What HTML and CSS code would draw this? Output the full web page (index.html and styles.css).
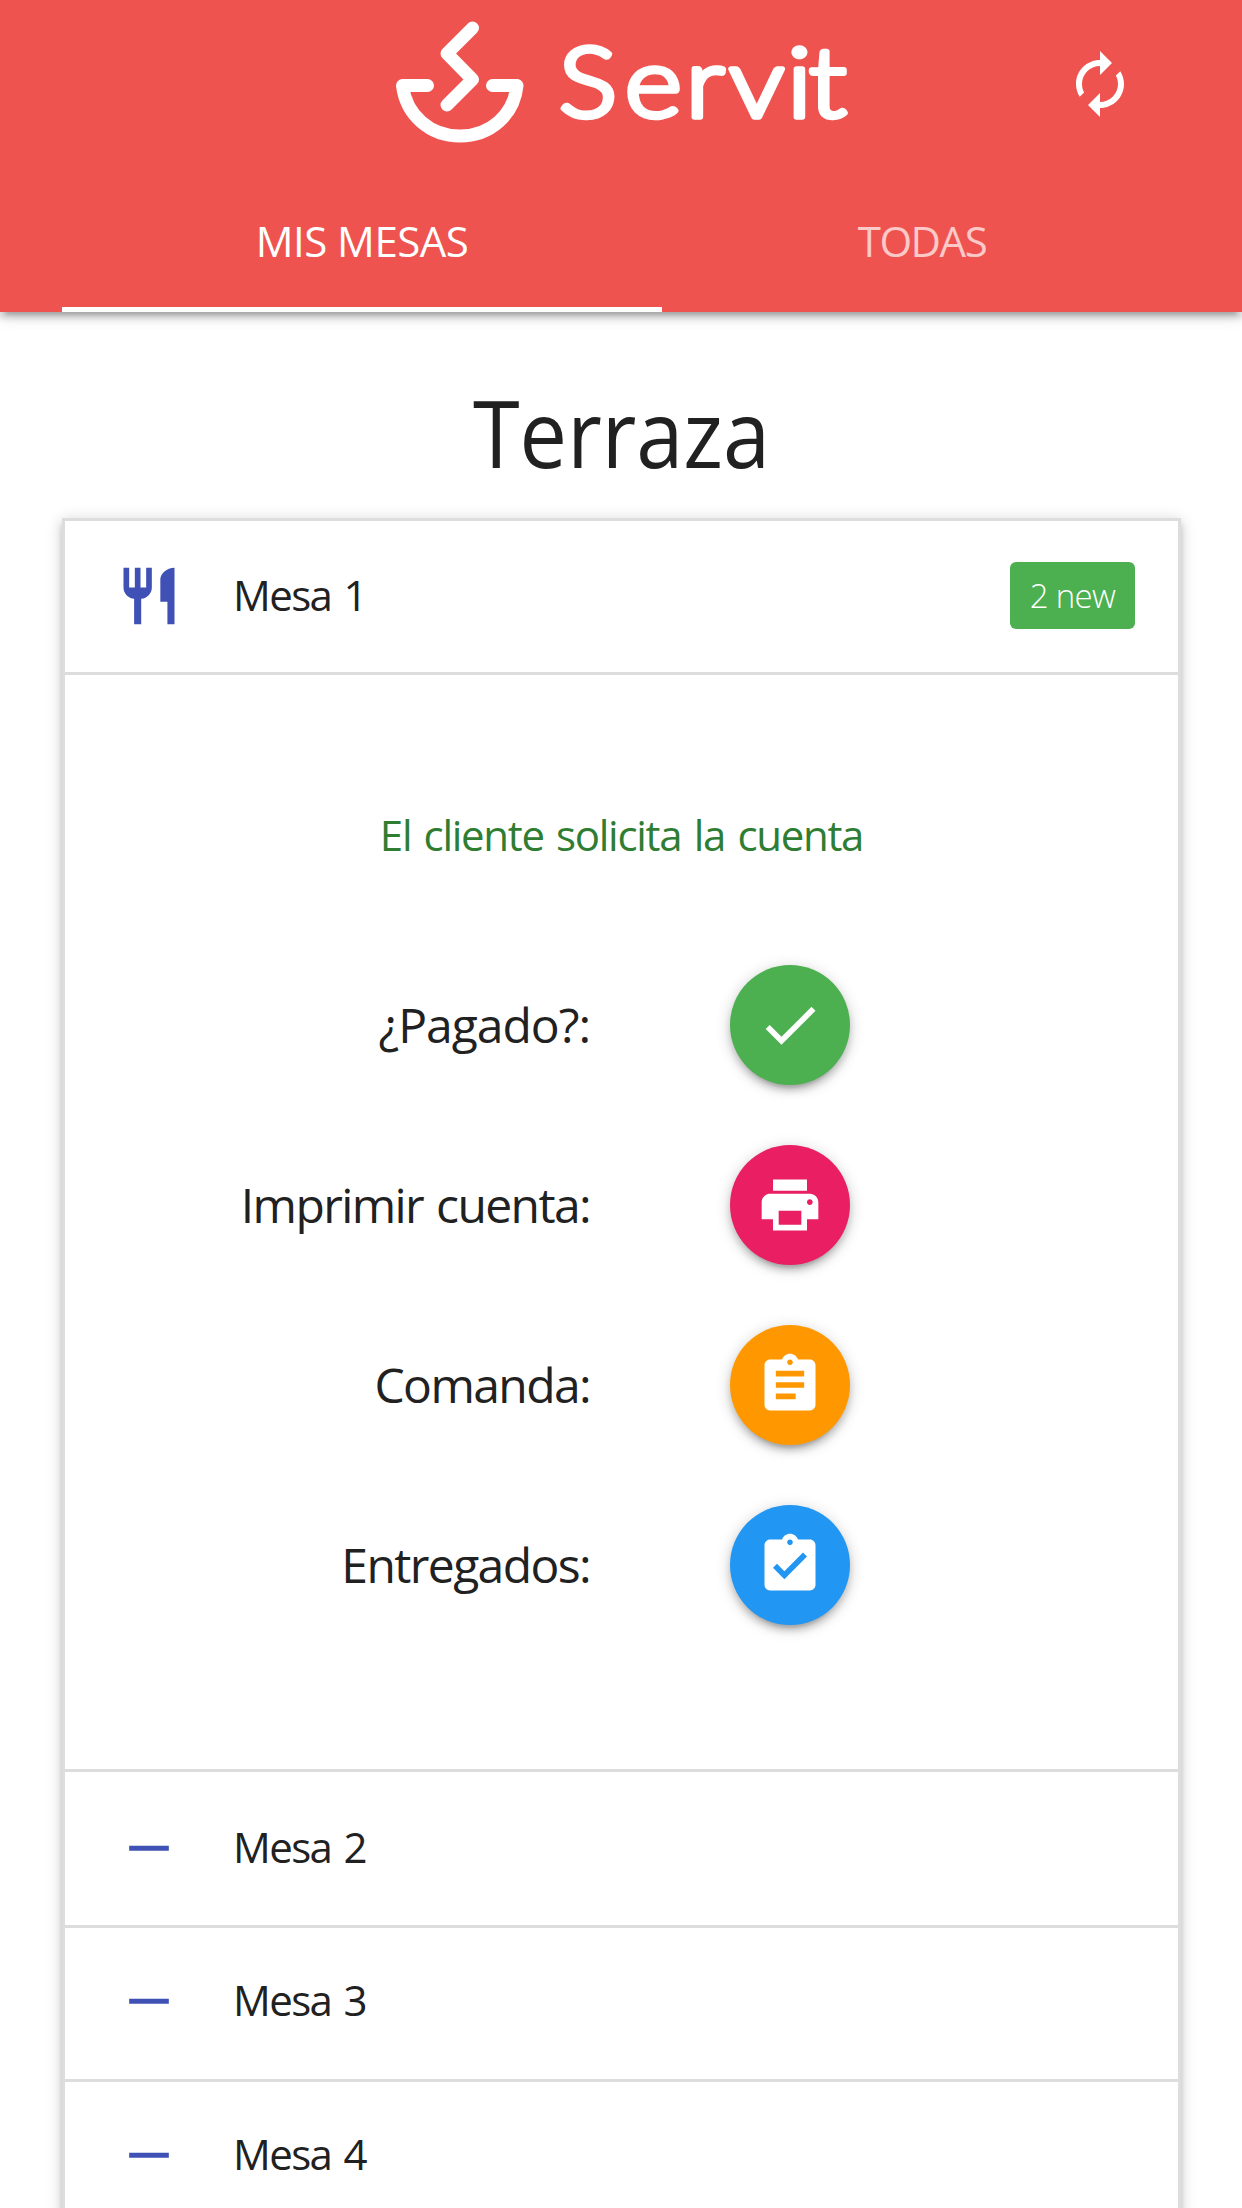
FILE: index.html
```html
<!DOCTYPE html>
<html lang="es">
<head>
<meta charset="utf-8">
<title>Servit</title>
<link rel="stylesheet" href="styles.css">
</head>
<body>
<header class="nav">
  <div class="brand-row">
    <svg class="logo" viewBox="0 0 460 150" role="img" aria-label="Servit">
      <g class="logo-mark">
        <path d="M82.500 28 L57 53.500 L82.500 79.500 L57 105"/>
        <path d="M37.500 85.500 H12.500 C16 115 40 136 70 136 C100 136 124 115 127 85.500 H102.500"/>
      </g>
      <text class="logo-text" transform="scale(1.14 1)" y="117.500" x="148 206 259.500 297.500 348.500 367.500">Servit</text>
    </svg>
    <svg class="refresh" viewBox="0 0 24 24"><path d="M12 6v3l4-4-4-4v3c-4.420 0-8 3.580-8 8 0 1.570.46 3.030 1.240 4.260L6.700 14.800c-.45-.83-.7-1.790-.7-2.800 0-3.310 2.690-6 6-6zm6.760 1.740L17.300 9.200c.44.840.7 1.790.7 2.800 0 3.310-2.690 6-6 6v-3l-4 4 4 4v-3c4.420 0 8-3.580 8-8 0-1.570-.46-3.030-1.240-4.260z"/></svg>
  </div>
  <nav class="tabs">
    <a class="tab active">MIS MESAS</a>
    <a class="tab">TODAS</a>
  </nav>
</header>
<main class="container">
  <h1 class="title">Terraza</h1>
  <ul class="tables">
    <li>
      <div class="row">
        <svg class="icon" viewBox="0 0 24 24"><path d="M11 9H9V2H7v7H5V2H3v7c0 2.120 1.660 3.840 3.750 3.970V22h2.500v-9.030C11.340 12.840 13 11.120 13 9V2h-2v7zm5-3v8h2.500v8H21V2c-2.760 0-5 2.240-5 4z"/></svg>
        <span class="name">Mesa 1</span>
        <span class="badge">2 new</span>
      </div>
      <div class="body">
        <p class="notice">El cliente solicita la cuenta</p>
        <div class="action"><span class="label loose">¿Pagado?:</span>
          <button class="fab green"><svg viewBox="0 0 24 24"><path d="M9 16.170L4.830 12l-1.420 1.410L9 19 21 7l-1.410-1.410z"/></svg></button></div>
        <div class="action"><span class="label">Imprimir cuenta:</span>
          <button class="fab pink"><svg viewBox="0 0 24 24"><path d="M19 8H5c-1.660 0-3 1.340-3 3v6h4v4h12v-4h4v-6c0-1.660-1.340-3-3-3zm-3 11H8v-5h8v5zm3-7c-.55 0-1-.45-1-1s.45-1 1-1 1 .45 1 1-.45 1-1 1zm-1-9H6v4h12V3z"/></svg></button></div>
        <div class="action"><span class="label">Comanda:</span>
          <button class="fab orange"><svg viewBox="0 0 24 24"><path d="M19 3h-4.180C14.400 1.840 13.300 1 12 1c-1.300 0-2.400.84-2.820 2H5c-1.100 0-2 .9-2 2v14c0 1.100.9 2 2 2h14c1.100 0 2-.9 2-2V5c0-1.100-.9-2-2-2zm-7 0c.55 0 1 .45 1 1s-.45 1-1 1-1-.45-1-1 .45-1 1-1zm2 14H7v-2h7v2zm3-4H7v-2h10v2zm0-4H7V7h10v2z"/></svg></button></div>
        <div class="action"><span class="label">Entregados:</span>
          <button class="fab blue"><svg viewBox="0 0 24 24"><path d="M19 3h-4.180C14.400 1.840 13.300 1 12 1c-1.300 0-2.400.84-2.820 2H5c-1.100 0-2 .9-2 2v14c0 1.100.9 2 2 2h14c1.100 0 2-.9 2-2V5c0-1.100-.9-2-2-2zm-7 0c.55 0 1 .45 1 1s-.45 1-1 1-1-.45-1-1 .45-1 1-1zm-2 14l-4-4 1.410-1.410L10 14.170l6.590-6.590L18 9l-8 8z"/></svg></button></div>
      </div>
    </li>
    <li class="row tall"><svg class="icon" viewBox="0 0 24 24"><path d="M5 11.200h14v1.800H5z"/></svg><span class="name">Mesa 2</span></li>
    <li class="row raised"><svg class="icon" viewBox="0 0 24 24"><path d="M5 11.200h14v1.800H5z"/></svg><span class="name">Mesa 3</span></li>
    <li class="row raised"><svg class="icon" viewBox="0 0 24 24"><path d="M5 11.200h14v1.800H5z"/></svg><span class="name">Mesa 4</span></li>
  </ul>
</main>
</body>
</html>
```
FILE: styles.css
```css
* { box-sizing: border-box; }
html, body { height: 2208px; overflow: hidden; }
body {
  margin: 0;
  background: #fff;
  color: #212121;
  font-family: "Open Sans", "Noto Sans", sans-serif;
  font-size: 42px;
}
.nav, .tables, .fab {
  box-shadow: 0 6px 6px rgba(0,0,0,.14), 0 9px 3px -6px rgba(0,0,0,.12), 0 3px 15px rgba(0,0,0,.2);
}
.nav {
  height: 312px;
  background: #ef5350;
  color: #fff;
  display: flex;
  flex-direction: column;
  justify-content: space-between;
}
.brand-row {
  display: flex;
  justify-content: space-between;
  padding: 0 106px 0 390px;
}
.logo { width: 460px; height: 150px; overflow: visible; }
.logo-mark { fill: none; stroke: #fff; stroke-width: 13px; stroke-linecap: round; stroke-linejoin: round; }
.logo-text {
  font-family: Lato, sans-serif;
  font-size: 96px;
  font-weight: 300;
  fill: #fff;
  stroke: #fff;
  stroke-width: 5.500px;
  stroke-linejoin: round;
}
.refresh { width: 72px; height: 72px; margin-top: 48px; fill: #fff; }
.tabs { display: flex; padding: 0 62px; height: 144px; }
.tab {
  flex: 0 0 600px;
  display: flex;
  align-items: center;
  justify-content: center;
  padding-top: 6px;
  color: rgba(255,255,255,.7);
  border-bottom: 5px solid transparent;
  letter-spacing: -1.500px;
}
.tab + .tab { flex: 0 0 520px; }
.tab.active { color: #fff; border-color: #fff; letter-spacing: -.5px; }
.container { width: 1119px; margin-left: 62px; }
.title {
  margin: 0;
  height: 206px;
  padding-top: 54px;
  font-size: 94px;
  line-height: 132px;
  font-weight: 400;
  transform: scaleX(.9);
  text-align: center;
}
.tables { margin: 0; padding: 0; list-style: none; border: 3px solid #ddd; border-bottom: 0; background: #fff; }
.row {
  display: flex;
  align-items: center;
  height: 154px;
  padding: 0 43px 2px 50px;
  border-bottom: 3px solid #ddd;
}
.row.tall { height: 156px; }
.row.raised { padding-bottom: 5px; }
.name { padding-bottom: 3px; letter-spacing: -1.600px; word-spacing: 3px; }
.icon { width: 68px; height: 68px; margin-right: 50px; fill: #3f51b5; }
.badge {
  display: flex;
  align-items: center;
  justify-content: center;
  width: 125px;
  height: 67px;
  padding-bottom: 1px;
  margin-left: auto;
  border-radius: 6px;
  background: #4caf50;
  color: #fff;
  font-size: 33px;
  font-weight: 300;
  letter-spacing: -.7px;
}
.body { height: 1097px; padding-top: 131px; border-bottom: 3px solid #ddd; }
.notice { margin: 0 0 102px; line-height: 57px; color: #2e7d32; text-align: center; letter-spacing: -1.300px; word-spacing: 2.800px; }
.action { display: flex; align-items: center; height: 120px; margin-bottom: 60px; }
.label { width: 525px; padding-bottom: 2px; margin-right: 139.500px; text-align: right; font-size: 48px; white-space: nowrap; letter-spacing: -1.600px; word-spacing: 2px; }
.label.loose { letter-spacing: -1px; }
.fab {
  display: flex;
  align-items: center;
  justify-content: center;
  width: 120px;
  height: 120px;
  padding: 0;
  border: 0;
  border-radius: 50%;
}
.fab svg { width: 68px; height: 68px; fill: #fff; }
.green { background: #4caf50; }
.pink { background: #e91e63; }
.orange { background: #ff9800; }
.blue { background: #2196f3; }
```
